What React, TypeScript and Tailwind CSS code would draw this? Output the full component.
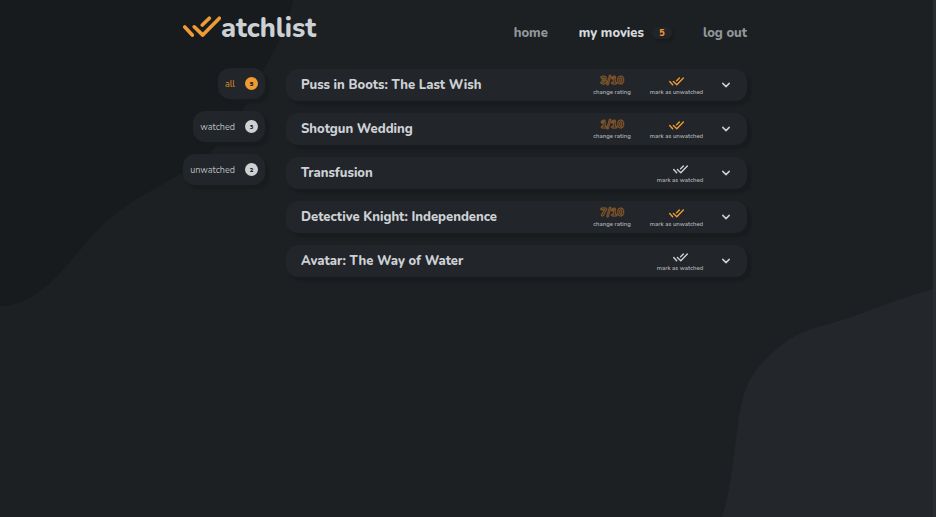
import React from "react";

const NUNITO = "font-['Nunito','Lato','Noto_Sans',sans-serif]";
const CAPTION = "text-[6px] leading-[10px] font-semibold text-[#afb4b8] whitespace-nowrap";

type Filter = { label: string; count: number; active?: boolean };
type Movie = { title: string; rating?: number };

const filters: Filter[] = [
  { label: "all", count: 5, active: true },
  { label: "watched", count: 3 },
  { label: "unwatched", count: 2 },
];

const movies: Movie[] = [
  { title: "Puss in Boots: The Last Wish", rating: 3 },
  { title: "Shotgun Wedding", rating: 1 },
  { title: "Transfusion" },
  { title: "Detective Knight: Independence", rating: 7 },
  { title: "Avatar: The Way of Water" },
];

function DoubleCheck({ className }: { className: string }) {
  return (
    <svg viewBox="0 0 39 22" className={className} fill="none" stroke="currentColor" strokeLinecap="round" strokeLinejoin="round" aria-hidden="true">
      <path d="M1.800 11 L9.500 19.300 M11.500 10.800 L20.300 19.300 L37.300 2 M19.800 9 L27 2" strokeWidth="3.700" />
    </svg>
  );
}

function Background() {
  return (
    <svg viewBox="0 0 933 517" preserveAspectRatio="none" className="absolute inset-0 -z-10 h-full w-full" aria-hidden="true">
      <path fill="#171b1d" d="M0 0 H293 C289 26 276 47 263 71 C250 96 240 118 222 141 C205 158 190 169 170 180 C140 197 115 210 92 236 C72 259 54 283 33 296 C22 303 11 306 0 306 Z" />
      <path fill="#23262a" d="M933 289 C890 301 860 316 825 325 C796 333 784 341 766 359 C750 374 744 391 741 406 C735 434 733 486 722 517 H933 Z" />
    </svg>
  );
}

function Header() {
  return (
    <header className="flex items-start justify-between pt-3">
      <a href="#home" aria-label="Watchlist" className="flex items-start text-[#cdd1d5]">
        <span className="flex h-[30px] items-center">
          <DoubleCheck className="h-[22px] w-[38px] text-[#ee9b34]" />
        </span>
        <span className="pt-[2px] text-[27px] leading-[30px] font-extrabold">atchlist</span>
      </a>
      <nav className="flex items-center pt-[11px] text-[13px] leading-5 font-extrabold text-[#92979b]">
        <a href="#home">home</a>
        <a href="#movies" className="ml-[31px] flex items-center gap-2 text-[#d6d9dd]">
          my movies
          <span className="flex h-3 w-5 items-center justify-center rounded-full bg-[#212529] text-[9px] leading-3 text-[#ee9b34] shadow-[2px_2px_2px_#171b1d]">5</span>
        </a>
        <a href="#logout" className="ml-[31px]">log out</a>
      </nav>
    </header>
  );
}

function FilterButton({ label, count, active }: Filter) {
  return (
    <button type="button" className={`flex h-[31px] items-center gap-[10px] rounded-xl bg-[#222529] px-[7px] text-[9px] leading-3 shadow-[4px_4px_2px_#181c1e] ${active ? "text-[#e0902f]" : "text-[#b9bec2]"}`}>
      <span className="pt-px">{label}</span>
      <span className={`flex size-[13px] items-center justify-center rounded-full text-[6px] font-black text-[#222529] ${active ? "bg-[#ee9b34]" : "bg-[#cdd1d5]"}`}>{count}</span>
    </button>
  );
}

function MovieRow({ title, rating }: Movie) {
  const watched = rating !== undefined;
  return (
    <li className="flex h-8 items-center rounded-xl bg-[#222529] pr-4 pl-[15px] shadow-[4px_4px_2px_#181c1e]">
      <h2 className="flex-1 text-[13px] leading-5 font-extrabold text-[#cdd1d5]">{title}</h2>
      {watched && (
        <button type="button" className="mr-4 flex min-w-10 flex-col items-center pt-[2px]">
          <span className="text-[11px] leading-3 font-black text-transparent [-webkit-text-stroke:1px_#8a5a2a]">{rating}/10</span>
          <span className={CAPTION}>change rating</span>
        </button>
      )}
      <button type="button" className={`flex flex-col items-center pt-[2px] ${watched ? "min-w-[57px]" : "min-w-[50px]"}`}>
        <span className="flex h-3 items-center">
          <DoubleCheck className={`h-[9px] w-[15px] ${watched ? "text-[#ee9b34]" : "text-[#cdd1d5]"}`} />
        </span>
        <span className={CAPTION}>{watched ? "mark as unwatched" : "mark as watched"}</span>
      </button>
      <button type="button" aria-label={`Show details of ${title}`} className="ml-4 text-[#cdd1d5]">
        <svg viewBox="0 0 10 10" className="size-[10px]" fill="none" stroke="currentColor" strokeWidth="1.500" strokeLinecap="round" strokeLinejoin="round" aria-hidden="true">
          <path d="M1.800 3.400 L5 6.600 L8.200 3.400" />
        </svg>
      </button>
    </li>
  );
}

export default function App() {
  return (
    <div className={`${NUNITO} relative isolate min-h-screen border-r-[3px] border-[#2a2d2f] bg-[#1c2022]`}>
      <Background />
      <div className="mx-auto w-full max-w-[567px] pr-[3px]">
        <Header />
        <div className="mt-6 flex items-start gap-[21px]">
          <aside className="flex w-[82px] shrink-0 flex-col items-end gap-3">
            {filters.map((f) => (
              <FilterButton key={f.label} {...f} />
            ))}
          </aside>
          <ul className="flex min-w-0 flex-1 flex-col gap-3 pt-px">
            {movies.map((m) => (
              <MovieRow key={m.title} {...m} />
            ))}
          </ul>
        </div>
      </div>
    </div>
  );
}
